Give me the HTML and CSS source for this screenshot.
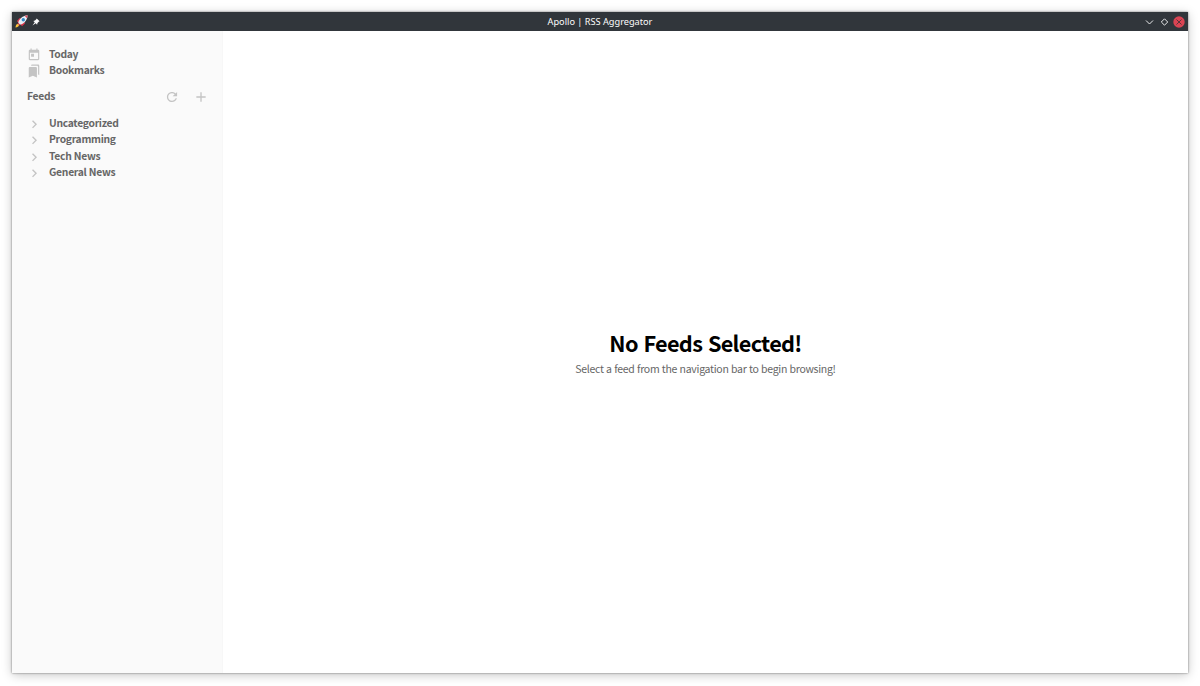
FILE: index.html
```html
<!DOCTYPE html>
<html lang="en">
<head>
<meta charset="utf-8">
<title>Apollo | RSS Aggregator</title>
<link rel="stylesheet" href="styles.css">
</head>
<body>
<div class="window">
  <header class="titlebar">
    <div class="title-left">
      <svg class="rocket" viewBox="0 0 13 13">
        <path d="M1.800 6.200 4.600 3 7.200 3.800 3.800 7.400zM7 11.200 10 8.400 9.200 6 5.600 9.400z" fill="#d9354a"/>
        <path d="M3 8.900C3.400 4.800 7 .6 12.600.3 12.400 5.800 8.300 9.400 4.200 9.900z" fill="#e9eff5"/>
        <path d="M9.700.9 12.600.3 12 3.300z" fill="#e04558"/>
        <circle cx="8.300" cy="4.700" r="1.700" fill="#3389c8"/>
        <path d="M3 7.500 5.500 10 4.300 10.500 2.500 8.700z" fill="#c92840"/>
        <path d="M.5 12.500C.6 10.500 1.300 8.900 2.700 8.900 4.500 9 4.600 12 .5 12.500z" fill="#ffc33a"/>
      </svg>
      <svg class="pin" viewBox="0 0 8 8"><path d="M4.700.4 7.600 3.300 6.700 3.700 5.500 5 5.100 6.700 3.700 5.300.5 7.600 2.700 4.300 1.300 2.900 3 2.500 4.300 1.300z" fill="#fcfcfc"/></svg>
    </div>
    <div class="title">Apollo | RSS Aggregator</div>
    <div class="controls">
      <svg class="control" viewBox="0 0 12 12"><path d="M3 4.500 6.500 8 10 4.500" fill="none" stroke="#e8e9ea"/></svg>
      <svg class="control" viewBox="0 0 12 12"><path d="M6.500 2.800 9.700 6 6.500 9.200 3.300 6z" fill="none" stroke="#e8e9ea"/></svg>
      <svg class="control" viewBox="0 0 12 12"><circle cx="6" cy="6" r="5.700" fill="#da4453"/><path d="M3.500 3.500 8.500 8.500M8.500 3.500 3.500 8.500" fill="none" stroke="#5b333a"/></svg>
    </div>
  </header>
  <div class="content">
    <nav class="sidebar">
      <div class="row">
        <svg class="icon" viewBox="0 0 24 24"><path d="M19 3h-1V1h-2v2H8V1H6v2H5c-1.110 0-1.990.9-1.990 2L3 19c0 1.100.89 2 2 2h14c1.100 0 2-.9 2-2V5c0-1.100-.9-2-2-2zm0 16H5V8h14v11zM7 10h5v5H7z"/></svg>
        <span class="label">Today</span>
      </div>
      <div class="row">
        <svg class="icon" viewBox="0 0 24 24"><path d="M19 18l2 1V3c0-1.100-.9-2-2-2H8.990C7.890 1 7 1.900 7 3h10c1.100 0 2 .9 2 2v13zM15 5H5c-1.100 0-2 .9-2 2v16l7-3 7 3V7c0-1.100-.9-2-2-2z"/></svg>
        <span class="label">Bookmarks</span>
      </div>
      <div class="feeds-heading">
        <span class="label feeds">Feeds</span>
        <svg class="icon action" viewBox="1 1 22 22"><path d="M17.650 6.350C16.200 4.900 14.210 4 12 4c-4.420 0-7.990 3.580-7.990 8s3.570 8 7.990 8c3.730 0 6.840-2.550 7.730-6h-2.080c-.82 2.330-3.040 4-5.650 4-3.310 0-6-2.690-6-6s2.690-6 6-6c1.660 0 3.140.69 4.220 1.780L13 11h7V4l-2.350 2.350z"/></svg>
        <svg class="icon action" viewBox="1.500 1.500 21 21"><path d="M19 13h-6v6h-2v-6H5v-2h6V5h2v6h6v2z"/></svg>
      </div>
      <div class="row"><svg class="icon" viewBox="1 1 21 21"><path d="M8.590 16.590 13.170 12 8.590 7.410 10 6l6 6-6 6z"/></svg><span class="label">Uncategorized</span></div>
      <div class="row"><svg class="icon" viewBox="1 1 21 21"><path d="M8.590 16.590 13.170 12 8.590 7.410 10 6l6 6-6 6z"/></svg><span class="label">Programming</span></div>
      <div class="row"><svg class="icon" viewBox="1 1 21 21"><path d="M8.590 16.590 13.170 12 8.590 7.410 10 6l6 6-6 6z"/></svg><span class="label">Tech News</span></div>
      <div class="row"><svg class="icon" viewBox="1 1 21 21"><path d="M8.590 16.590 13.170 12 8.590 7.410 10 6l6 6-6 6z"/></svg><span class="label">General News</span></div>
    </nav>
    <main class="empty">
      <h1 class="headline">No Feeds Selected!</h1>
      <p class="hint">Select a feed from the navigation bar to begin browsing!</p>
    </main>
  </div>
</div>
</body>
</html>
```
FILE: styles.css
```css
* { box-sizing: border-box; }
body {
  margin: 0;
  height: 686px;
  padding: 12px;
  overflow: hidden;
  background: #fff;
  font-family: "Noto Sans CJK SC", "Noto Sans", sans-serif;
}
.window {
  height: 661px;
  display: flex;
  flex-direction: column;
  background: #fff;
  box-shadow: 0 0 2px rgba(0,0,0,.5), 0 2px 10px rgba(0,0,0,.22);
}
.titlebar {
  height: 19px;
  flex: none;
  display: grid;
  grid-template-columns: 1fr auto 1fr;
  align-items: center;
  background: #31363b;
  color: #fcfcfc;
}
.title-left { display: flex; align-items: center; gap: 4px; padding-left: 3px; }
.rocket { width: 13px; height: 13px; }
.pin { width: 8px; height: 8px; }
.title { font: 9.200px/19px "Noto Sans", sans-serif; white-space: nowrap; }
.controls { display: flex; justify-content: flex-end; gap: 3px; padding-right: 3px; }
.control { width: 12px; height: 12px; }
.content { flex: 1; display: flex; }
.sidebar {
  width: 211px;
  padding: 14.400px 15px 14px;
  background: #fafafa;
  border-right: 1px solid #f7f7f7;
}
.row { height: 16.500px; display: flex; align-items: center; gap: 8px; }
.icon { width: 14px; height: 14px; flex: none; margin-top: 2px; fill: #c4c4c4; }
.label {
  font-size: 10.300px;
  line-height: 16px;
  font-weight: 700;
  letter-spacing: -0.280px;
  word-spacing: 0.300px;
  color: #666;
  white-space: nowrap;
}
.feeds-heading { height: 16px; display: flex; align-items: center; margin: 10px 0; gap: 15px; }
.feeds-heading .feeds { flex: 1; }
.action:last-child { margin-right: -1px; }
.empty {
  flex: 1;
  display: flex;
  flex-direction: column;
  align-items: center;
  padding-top: 296px;
}
.headline { margin: 0; font-size: 21.700px; line-height: 32px; font-weight: 700; letter-spacing: -0.700px; word-spacing: 1.500px; color: #000; white-space: nowrap; }
.hint { margin: 2px 0 0; font-size: 10.500px; line-height: 16px; letter-spacing: -0.280px; word-spacing: 0.400px; color: #666; white-space: nowrap; }
```
